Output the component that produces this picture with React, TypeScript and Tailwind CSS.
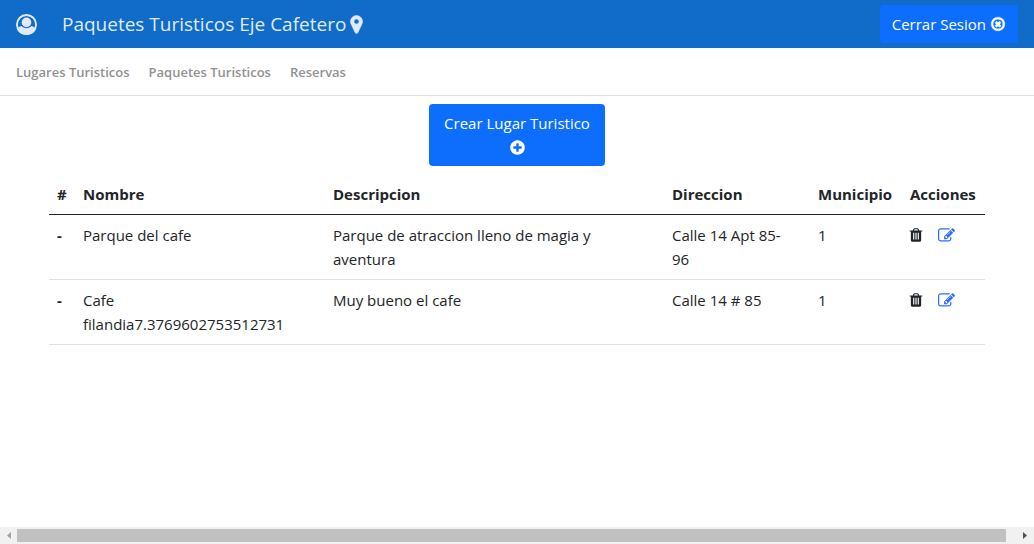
import React from "react";

const MARKER =
  "M1110 640q0-89-62.500-151.500t-151.500-62.500-151.500 62.500-62.500 151.500 62.500 151.500 151.500 62.500 151.500-62.500 62.500-151.500zm298 0q0 109-33 179l-364 774q-16 33-47.500 52t-67.500 19-67.500-19-46.500-52l-365-774q-33-70-33-179 0-212 150-362t362-150 362 150 150 362z";
const TIMES =
  "M1225 1111l-146 146q-10 10-23 10t-23-10l-137-137-137 137q-10 10-23 10t-23-10l-146-146q-10-10-10-23t10-23l137-137-137-137q-10-10-10-23t10-23l146-146q10-10 23-10t23 10l137 137 137-137q10-10 23-10t23 10l146 146q10 10 10 23t-10 23l-137 137 137 137q10 10 10 23t-10 23zm215-215q0-148-73-273t-198-198-273-73-273 73-198 198-73 273 73 273 198 198 273 73 273-73 198-198 73-273zm224 0q0 209-103 385.5t-279.5 279.5-385.5 103-385.5-103-279.5-279.5-103-385.5 103-385.5 279.5-279.5 385.5-103 385.5 103 279.5 279.5 103 385.5z";
const PLUS =
  "M1344 960v-128q0-26-19-45t-45-19h-256v-256q0-26-19-45t-45-19h-128q-26 0-45 19t-19 45v256h-256q-26 0-45 19t-19 45v128q0 26 19 45t45 19h256v256q0 26 19 45t45 19h128q26 0 45-19t19-45v-256h256q26 0 45-19t19-45zm320-64q0 209-103 385.5t-279.5 279.5-385.5 103-385.5-103-279.5-279.5-103-385.5 103-385.5 279.5-279.5 385.5-103 385.5 103 279.5 279.5 103 385.5z";
const TRASH =
  "M704 1376v-704q0-14-9-23t-23-9h-64q-14 0-23 9t-9 23v704q0 14 9 23t23 9h64q14 0 23-9t9-23zm256 0v-704q0-14-9-23t-23-9h-64q-14 0-23 9t-9 23v704q0 14 9 23t23 9h64q14 0 23-9t9-23zm256 0v-704q0-14-9-23t-23-9h-64q-14 0-23 9t-9 23v704q0 14 9 23t23 9h64q14 0 23-9t9-23zm-544-992h448l-48-117q-7-9-17-11h-317q-10 2-17 11zm928 32v64q0 14-9 23t-23 9h-96v948q0 83-47 143.5t-113 60.5h-832q-66 0-113-58.5t-47-141.5v-952h-96q-14 0-23-9t-9-23v-64q0-14 9-23t23-9h309l70-167q15-37 54-63t79-26h320q40 0 79 26t54 63l70 167h309q14 0 23 9t9 23z";
const EDIT =
  "M888 1184l116-116-152-152-116 116v56h96v96h56zm440-720q-16-16-33 1l-350 350q-17 17-1 33t33-1l350-350q17-17 1-33zm80 594v190q0 119-84.5 203.5t-203.5 84.5h-832q-119 0-203.5-84.5t-84.5-203.5v-832q0-119 84.5-203.5t203.5-84.5h832q63 0 117 25 15 7 18 23 3 17-9 29l-49 49q-14 14-32 8-23-6-45-6h-832q-66 0-113 47t-47 113v832q0 66 47 113t113 47h832q66 0 113-47t47-113v-126q0-13 9-22l64-64q15-15 35-7t20 29zm-96-738l288 288-672 672h-288v-288zm444 132l-92 92-288-288 92-92q28-28 68-28t68 28l152 152q28 28 28 68t-28 68z";

function Icon({ path, className }: { path: string; className: string }) {
  return (
    <svg viewBox="0 0 1792 1792" fill="currentColor" aria-hidden="true" className={className}>
      <path d={path} />
    </svg>
  );
}

function UserIcon() {
  return (
    <svg viewBox="0 0 20 20" aria-hidden="true" className="size-[21px]">
      <circle cx="10" cy="10" r="9.1" fill="none" stroke="currentColor" strokeWidth="1.8" />
      <circle cx="10" cy="8" r="4.6" fill="currentColor" />
      <path
        fill="currentColor"
        d="M5.300 11.500c1.200 1.300 2.800 2 4.700 2s3.500-.7 4.700-2c2.200.4 3.600 1.700 4 3.800A9.900 9.900 0 0 1 10 19.900a9.900 9.900 0 0 1-8.700-4.600c.4-2.100 1.800-3.400 4-3.800z"
      />
    </svg>
  );
}

const lugares = [
  {
    nombre: "Parque del cafe",
    descripcion: "Parque de atraccion lleno de magia y aventura",
    direccion: "Calle 14 Apt 85-96",
    municipio: 1,
  },
  {
    nombre: "Cafe filandia7.3769602753512731",
    descripcion: "Muy bueno el cafe",
    direccion: "Calle 14 # 85",
    municipio: 1,
  },
];

export default function App() {
  return (
    <div className="flex min-h-screen flex-col bg-white font-['Open_Sans','Noto_Sans',sans-serif] text-[15px] leading-6 text-[#212529]">
      <header className="flex h-12 items-center bg-[#116bc9] px-4 text-[#dfebf8]">
        <button type="button" aria-label="Perfil" className="mr-[25px]">
          <UserIcon />
        </button>
        <h1 className="flex items-center text-[19px]">
          Paquetes Turisticos Eje Cafetero
          <Icon path={MARKER} className="size-[21px] stroke-current stroke-[50]" />
        </h1>
        <button
          type="button"
          className="ml-auto flex items-center gap-1 rounded bg-[#0d6efd] px-3 py-[7px] text-white"
        >
          Cerrar Sesion
          <Icon path={TIMES} className="size-4 stroke-current stroke-[40]" />
        </button>
      </header>

      <nav className="flex h-12 items-center gap-[19px] border-b border-[#dedede] px-4 text-[13px] font-semibold text-[#919191]">
        <a href="#lugares">Lugares Turisticos</a>
        <a href="#paquetes">Paquetes Turisticos</a>
        <a href="#reservas">Reservas</a>
      </nav>

      <main className="mx-auto w-full max-w-[960px] grow px-3 pt-2">
        <button
          type="button"
          className="mx-auto mb-2 flex w-44 flex-col items-center rounded bg-[#0d6efd] py-[7px] text-white"
        >
          Crear Lugar Turistico
          <span className="flex h-6 items-center">
            <Icon path={PLUS} className="size-[17px]" />
          </span>
        </button>

        <table className="w-full table-fixed border-collapse text-left align-top">
          <colgroup>
            <col className="w-[26px]" />
            <col className="w-[250px]" />
            <col />
            <col className="w-[146px]" />
            <col className="w-[92px]" />
            <col className="w-[83px]" />
          </colgroup>
          <thead>
            <tr className="border-b border-[#212529]">
              <th className="p-2">#</th>
              <th className="p-2">Nombre</th>
              <th className="p-2">Descripcion</th>
              <th className="p-2">Direccion</th>
              <th className="p-2">Municipio</th>
              <th className="p-2">Acciones</th>
            </tr>
          </thead>
          <tbody>
            {lugares.map((lugar) => (
              <tr key={lugar.nombre} className="border-b border-[#dee2e6] align-top">
                <th scope="row" className="p-2">-</th>
                <td className="p-2">{lugar.nombre}</td>
                <td className="p-2">{lugar.descripcion}</td>
                <td className="py-2 pr-6 pl-2">{lugar.direccion}</td>
                <td className="p-2">{lugar.municipio}</td>
                <td className="p-2">
                  <div className="flex h-6 items-center gap-3.5">
                    <button type="button" aria-label="Eliminar" className="-ml-0.5">
                      <Icon path={TRASH} className="size-4" />
                    </button>
                    <button type="button" aria-label="Editar" className="text-[#2b6bff]">
                      <Icon path={EDIT} className="size-[17px]" />
                    </button>
                  </div>
                </td>
              </tr>
            ))}
          </tbody>
        </table>
      </main>

      <footer aria-hidden="true" className="flex h-[17px] items-center bg-[#f1f1f1]">
        <span className="flex w-[17px] justify-center text-[#a3a3a3]">
          <svg viewBox="0 0 4 7" fill="currentColor" className="h-[7px] w-1">
            <path d="M4 0v7L0 3.500z" />
          </svg>
        </span>
        <span className="h-[13px] grow bg-[#c1c1c1]" />
        <span className="flex w-7 justify-end pr-[7px] text-[#505050]">
          <svg viewBox="0 0 4 7" fill="currentColor" className="h-[7px] w-1">
            <path d="M0 0v7l4-3.500z" />
          </svg>
        </span>
      </footer>
    </div>
  );
}
